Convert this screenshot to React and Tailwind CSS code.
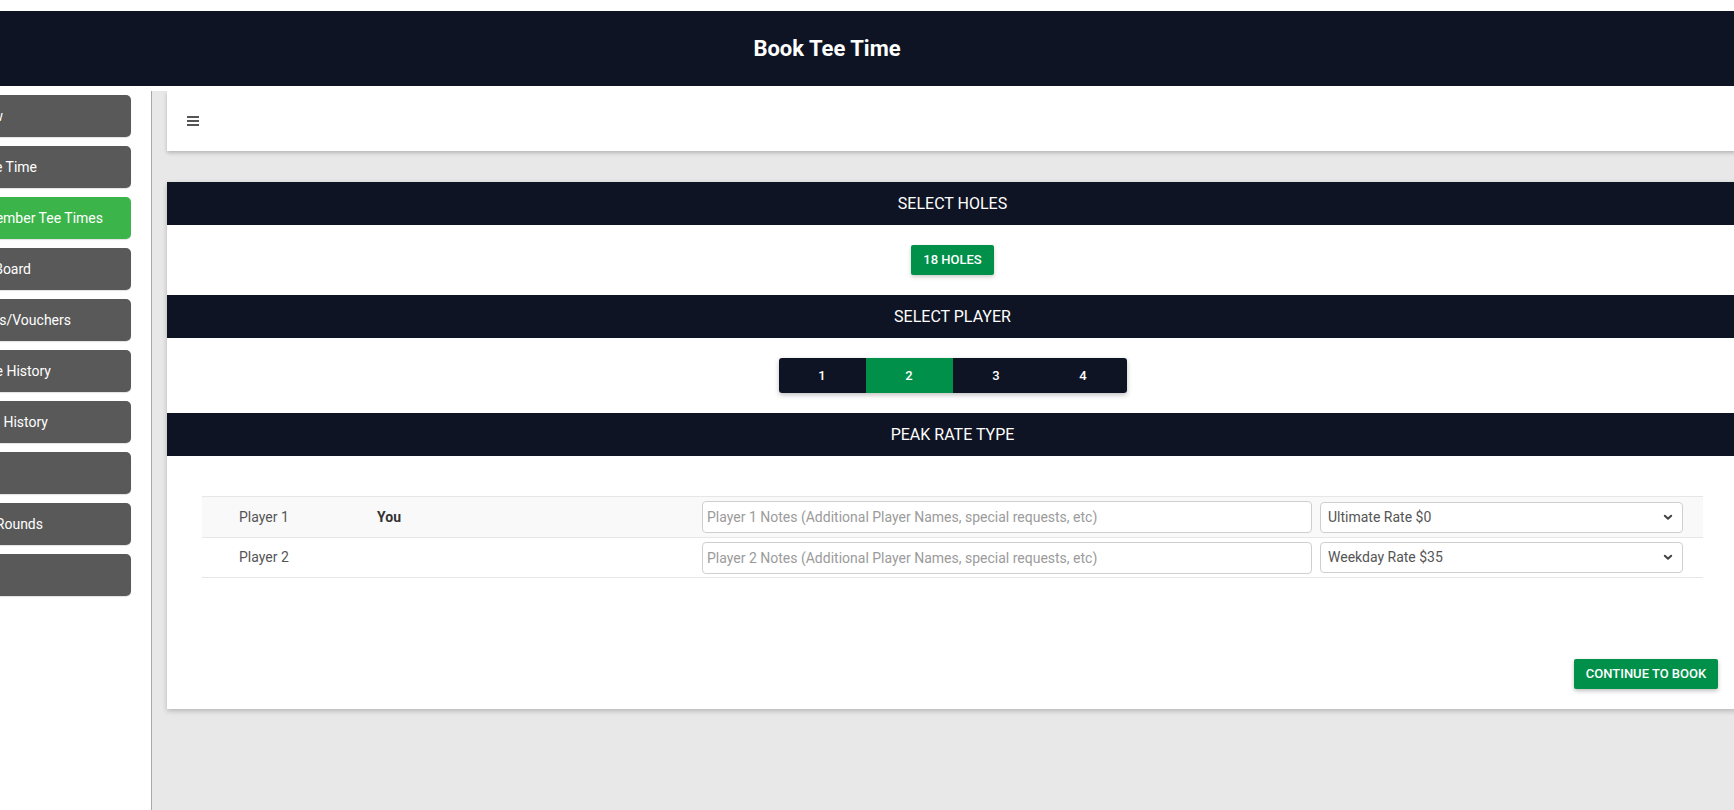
import React from "react";

const navItems = [
  { label: "Overview", end: "w-[3px]" },
  { label: "Book Tee Time", end: "w-[37px]" },
  { label: "Member Tee Times", end: "w-[103px]", active: true },
  { label: "Leader Board", end: "w-[31px]" },
  { label: "Gift Cards/Vouchers", end: "w-[71px]" },
  { label: "Purchase History", end: "w-[51px]" },
  { label: "Round History", end: "w-[48px]" },
  { label: "Profile", end: "w-[0px]" },
  { label: "My Rounds", end: "w-[43px]" },
  { label: "Logout", end: "w-[0px]" },
];

const players = [
  { name: "Player 1", who: "You", rate: "Ultimate Rate $0", shaded: true },
  { name: "Player 2", who: "", rate: "Weekday Rate $35", shaded: false },
];

function SectionBar({ title }) {
  return (
    <div className="h-[43px] bg-[#0f1424] flex items-center justify-center text-white text-[16px]">
      {title}
    </div>
  );
}

function Chevron() {
  return (
    <svg width="10" height="7" viewBox="0 0 10 7" className="absolute right-[10px] top-[12px] pointer-events-none">
      <path d="M1.8 1.8 L5 4.8 L8.2 1.8" fill="none" stroke="#444" strokeWidth="2" strokeLinecap="round" strokeLinejoin="round" />
    </svg>
  );
}

export default function App() {
  return (
    <div
      className="w-[1734px] h-[810px] overflow-hidden bg-white flex flex-col"
      style={{ fontFamily: "Roboto, 'Liberation Sans', sans-serif" }}
    >
      {/* header */}
      <div className="mt-[11px] h-[75px] shrink-0 bg-[#0f1424] flex items-center justify-center pr-[80px]">
        <h1 className="text-white text-[22px] font-bold">Book Tee Time</h1>
      </div>

      <div className="mt-[5px] flex flex-1 min-h-0">
        {/* sidebar, scrolled partly out of view on the left */}
        <div className="w-[152px] shrink-0 border-r border-[#a8a8a8] bg-white pt-[4px]">
          <div className="w-[131px] flex flex-col gap-[9px]">
            {navItems.map((item) => (
              <div
                key={item.label}
                className={
                  "h-[42px] rounded-r-[5px] flex items-center shadow-[0_1px_1px_rgba(0,0,0,0.12)] " +
                  (item.active ? "bg-[#3bb54a]" : "bg-[#595959]")
                }
              >
                <div className={"flex justify-end overflow-hidden whitespace-nowrap " + item.end}>
                  <span className="text-white text-[14px] shrink-0">{item.label}</span>
                </div>
              </div>
            ))}
          </div>
        </div>

        {/* main */}
        <div className="flex-1 min-w-0 bg-[#e8e8e8] pl-[15px] overflow-hidden">
          <div className="w-[1571px] h-[60px] bg-white shadow-[0_2px_4px_rgba(0,0,0,0.22)] flex items-center pl-[20px]">
            <div className="w-[12px] flex flex-col gap-[2px]">
              <span className="h-[2px] bg-[#555]" />
              <span className="h-[2px] bg-[#555]" />
              <span className="h-[2px] bg-[#555]" />
            </div>
          </div>

          <div className="mt-[31px] w-[1571px] bg-white shadow-[0_2px_5px_rgba(0,0,0,0.22)]">
            <SectionBar title="SELECT HOLES" />
            <div className="h-[70px] flex items-center justify-center">
              <button className="h-[30px] w-[83px] rounded-[2px] bg-[#00904a] text-white text-[13px] font-medium shadow-[0_2px_4px_rgba(0,0,0,0.2)]">
                18 HOLES
              </button>
            </div>

            <SectionBar title="SELECT PLAYER" />
            <div className="h-[75px] flex items-center justify-center">
              <div className="flex rounded-[3px] overflow-hidden shadow-[0_2px_5px_rgba(0,0,0,0.25)]">
                {["1", "2", "3", "4"].map((n) => (
                  <div
                    key={n}
                    className={
                      "w-[87px] h-[35px] flex items-center justify-center text-white text-[13px] font-medium " +
                      (n === "2" ? "bg-[#00904a]" : "bg-[#0f1424]")
                    }
                  >
                    {n}
                  </div>
                ))}
              </div>
            </div>

            <SectionBar title="PEAK RATE TYPE" />
            <div className="pt-[40px] px-[35px]">
              {players.map((p, i) => (
                <div
                  key={p.name}
                  className={
                    "h-[41px] flex items-center border-t border-[#e6e6e6] pr-[20px] " +
                    (p.shaded ? "bg-[#f9f9f9] " : "") +
                    (i === players.length - 1 ? "border-b" : "")
                  }
                >
                  <div className="w-[37px] shrink-0" />
                  <div className="w-[138px] shrink-0 text-[14px] text-[#555]">{p.name}</div>
                  <div className="w-[325px] shrink-0 text-[14px] font-bold text-[#333]">{p.who}</div>
                  <input
                    className="w-[610px] h-[32px] shrink-0 border border-[#cfcfcf] rounded-[4px] bg-white px-[4px] text-[14px] text-[#555] placeholder:text-[#9b9b9b] outline-none"
                    placeholder={`${p.name} Notes (Additional Player Names, special requests, etc)`}
                  />
                  <div className="relative ml-[8px] w-[363px] shrink-0">
                    <select
                      defaultValue={p.rate}
                      className="w-full h-[31px] appearance-none border border-[#cfcfcf] rounded-[4px] bg-white pl-[7px] text-[14px] text-[#555] outline-none"
                    >
                      <option>{p.rate}</option>
                    </select>
                    <Chevron />
                  </div>
                </div>
              ))}

              <div className="flex justify-end mr-[-15px] pt-[81px] pb-[20px]">
                <button className="h-[30px] w-[144px] rounded-[2px] bg-[#00904a] text-white text-[13px] font-medium shadow-[0_2px_4px_rgba(0,0,0,0.25)]">
                  CONTINUE TO BOOK
                </button>
              </div>
            </div>
          </div>
        </div>
      </div>
    </div>
  );
}
